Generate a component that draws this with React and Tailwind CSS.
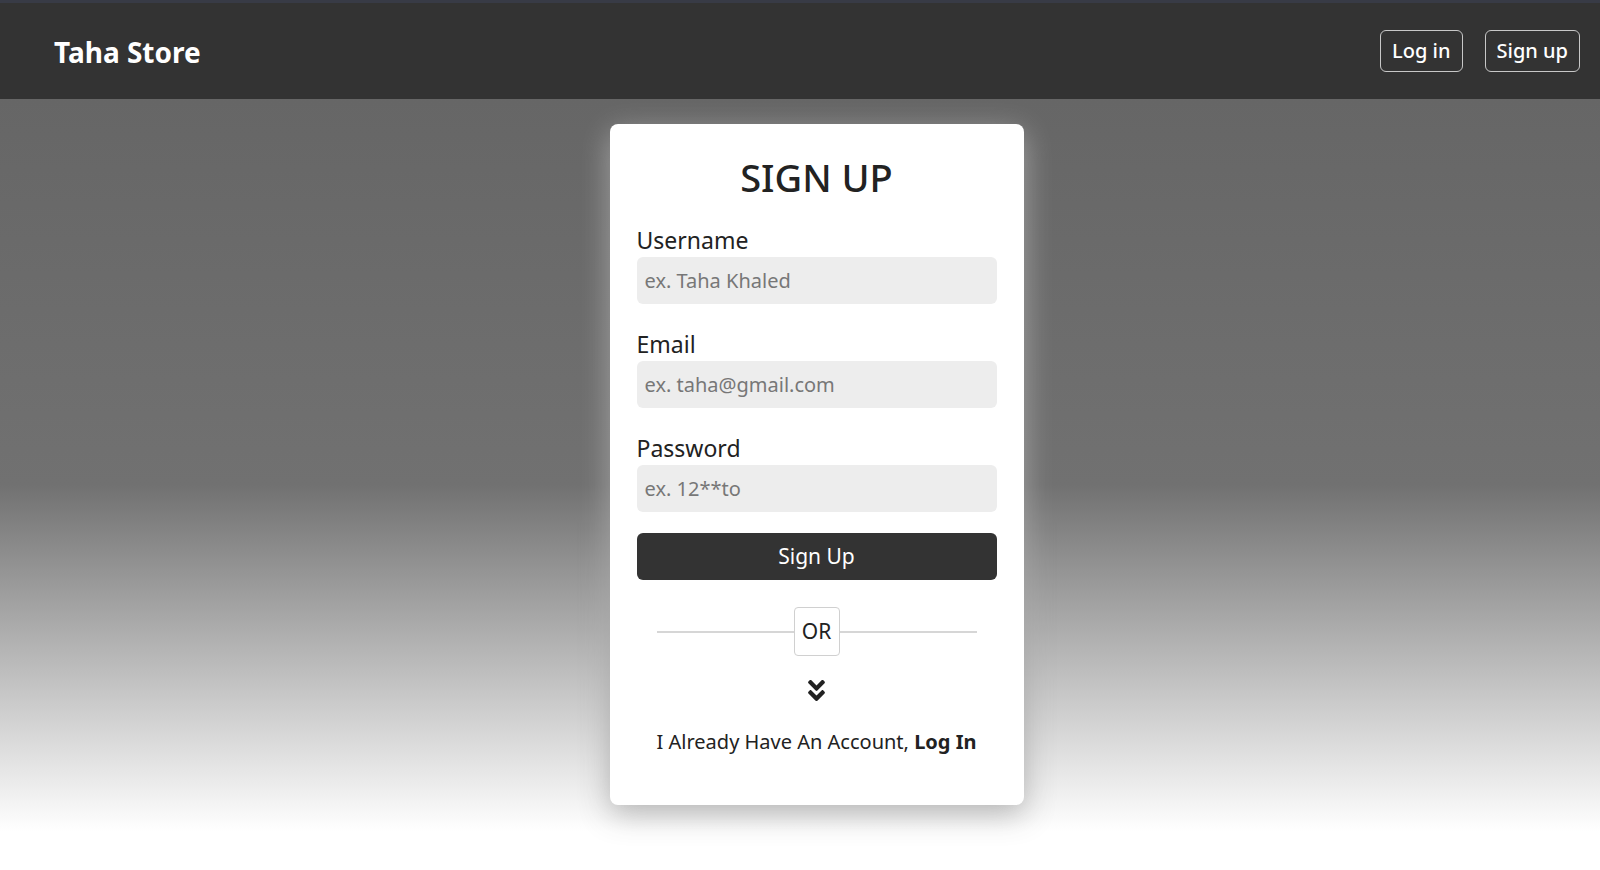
import React, { useState } from "react";
import { FaAngleDoubleDown } from "react-icons/fa";

function Navbar() {
  return (
    <header className="h-[99px] bg-[#333] border-t-[3px] border-[#383b46] flex items-center justify-between pl-[54px] pr-[20px]">
      <a className="text-white font-bold text-[28px] leading-none pt-[2px] cursor-pointer">Taha Store</a>
      <div className="flex gap-[22px]">
        <button className="h-[42px] px-[11px] border border-[#c8c8c8] rounded-[6px] text-white text-[20px] font-medium leading-none">
          Log in
        </button>
        <button className="h-[42px] px-[11px] border border-[#c8c8c8] rounded-[6px] text-white text-[20px] font-medium leading-none">
          Sign up
        </button>
      </div>
    </header>
  );
}

function Field({ label, type, placeholder, value, onChange, first }) {
  return (
    <div className={first ? "" : "mt-[25px]"}>
      <label className="block text-[23px] leading-[30px] text-[#222]">{label}</label>
      <input
        type={type}
        placeholder={placeholder}
        value={value}
        onChange={onChange}
        className="mt-[2px] w-full h-[47px] px-[8px] rounded-[6px] bg-[#ededed] text-[20px] text-[#222] placeholder:text-[#777] outline-none"
      />
    </div>
  );
}

export default function App() {
  const [form, setForm] = useState({ username: "", email: "", password: "" });

  return (
    <div className="min-h-screen flex flex-col font-['Noto_Sans','Liberation_Sans',sans-serif]">
      <Navbar />

      <main className="flex-1 flex justify-center items-start pl-[33px] pt-[25px] bg-[linear-gradient(to_bottom,#666_0%,#717171_50%,#fff_95%)]">
        <div className="w-[414px] bg-white rounded-[8px] px-[27px] pt-[30px] pb-[47px] shadow-[0_8px_30px_rgba(170,170,170,0.9)]">
          <h1 className="text-center text-[38px] leading-[46px] font-medium text-[#222] mb-[25px]">
            SIGN UP
          </h1>

          <form onSubmit={(e) => e.preventDefault()}>
            <Field
              first
              label="Username"
              type="text"
              placeholder="ex. Taha Khaled"
              value={form.username}
              onChange={(e) => setForm({ ...form, username: e.target.value })}
            />
            <Field
              label="Email"
              type="email"
              placeholder="ex. taha@gmail.com"
              value={form.email}
              onChange={(e) => setForm({ ...form, email: e.target.value })}
            />
            <Field
              label="Password"
              type="password"
              placeholder="ex. 12**to"
              value={form.password}
              onChange={(e) => setForm({ ...form, password: e.target.value })}
            />

            <button
              type="submit"
              className="mt-[21px] w-full h-[47px] rounded-[6px] bg-[#333] text-white text-[21px]"
            >
              Sign Up
            </button>
          </form>

          {/* OR divider */}
          <div className="mt-[27px] flex items-center px-[20px]">
            <div className="flex-1 h-[2px] bg-[#d6d6d6]" />
            <div className="w-[46px] h-[49px] flex items-center justify-center border border-[#d0d0d0] rounded-[4px] text-[21px] text-[#222]">
              OR
            </div>
            <div className="flex-1 h-[2px] bg-[#d6d6d6]" />
          </div>

          <div className="mt-[21px] flex justify-center text-[#222]">
            <FaAngleDoubleDown size={27} />
          </div>

          <p className="mt-[21px] text-center text-[20px] leading-[33px] text-[#222]">
            I Already Have An Account, <a className="font-bold cursor-pointer">Log In</a>
          </p>
        </div>
      </main>
    </div>
  );
}
